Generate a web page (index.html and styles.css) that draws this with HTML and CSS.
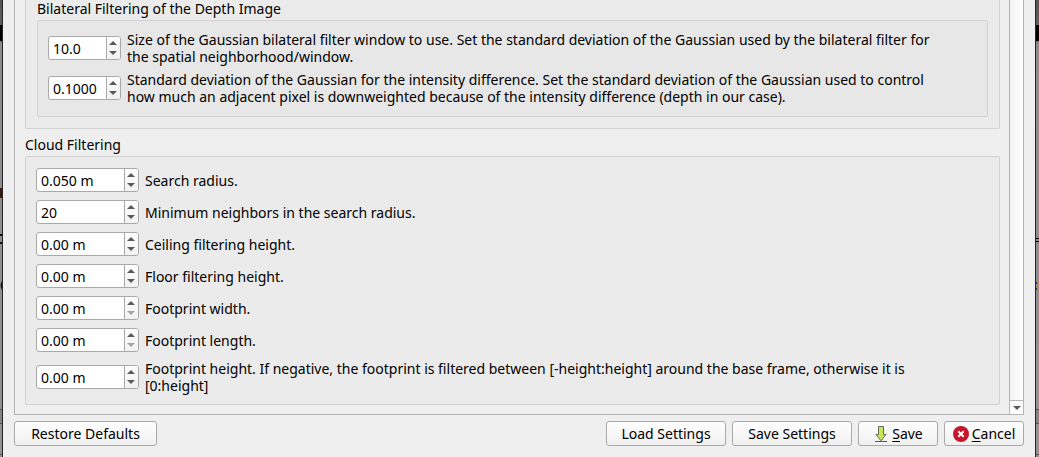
FILE: index.html
```html
<!DOCTYPE html>
<html lang="en">
<head>
<meta charset="utf-8">
<title>Export Settings</title>
<link rel="stylesheet" href="styles.css">
</head>
<body>
<div class="backdrop">
<main class="dialog">
  <div class="scroll-frame">
    <div class="content">
      <section class="group group-cut">
        <h2 class="title">Bilateral Filtering of the Depth Image</h2>
        <div class="group group-inner">
          <div class="row">
            <div class="spin spin-small"><input id="size" type="text" value="10.0"><span class="steps"><button class="up" aria-label="Increase"></button><button class="down" aria-label="Decrease"></button></span></div>
            <label for="size">Size of the Gaussian bilateral filter window to use. Set the standard deviation of the Gaussian used by the bilateral filter for<br>the spatial neighborhood/window.</label>
          </div>
          <div class="row">
            <div class="spin spin-small"><input id="dev" type="text" value="0.1000"><span class="steps"><button class="up" aria-label="Increase"></button><button class="down" aria-label="Decrease"></button></span></div>
            <label for="dev">Standard deviation of the Gaussian for the intensity difference. Set the standard deviation of the Gaussian used to control<br>how much an adjacent pixel is downweighted because of the intensity difference (depth in our case).</label>
          </div>
        </div>
      </section>
      <h2 class="title title-outer">Cloud Filtering</h2>
      <section class="group group-cloud">
        <div class="row">
          <div class="spin"><input id="radius" type="text" value="0.050 m"><span class="steps"><button class="up" aria-label="Increase"></button><button class="down" aria-label="Decrease"></button></span></div>
          <label for="radius">Search radius.</label>
        </div>
        <div class="row">
          <div class="spin"><input id="neighbors" type="text" value="20"><span class="steps"><button class="up" aria-label="Increase"></button><button class="down" aria-label="Decrease"></button></span></div>
          <label for="neighbors">Minimum neighbors in the search radius.</label>
        </div>
        <div class="row">
          <div class="spin"><input id="ceiling" type="text" value="0.00 m"><span class="steps"><button class="up" aria-label="Increase"></button><button class="down" aria-label="Decrease"></button></span></div>
          <label for="ceiling">Ceiling filtering height.</label>
        </div>
        <div class="row">
          <div class="spin"><input id="floor" type="text" value="0.00 m"><span class="steps"><button class="up" aria-label="Increase"></button><button class="down" aria-label="Decrease"></button></span></div>
          <label for="floor">Floor filtering height.</label>
        </div>
        <div class="row">
          <div class="spin"><input id="width" type="text" value="0.00 m"><span class="steps"><button class="up" aria-label="Increase"></button><button class="down" aria-label="Decrease" disabled></button></span></div>
          <label for="width">Footprint width.</label>
        </div>
        <div class="row">
          <div class="spin"><input id="length" type="text" value="0.00 m"><span class="steps"><button class="up" aria-label="Increase"></button><button class="down" aria-label="Decrease" disabled></button></span></div>
          <label for="length">Footprint length.</label>
        </div>
        <div class="row">
          <div class="spin"><input id="height" type="text" value="0.00 m"><span class="steps"><button class="up" aria-label="Increase"></button><button class="down" aria-label="Decrease"></button></span></div>
          <label for="height">Footprint height. If negative, the footprint is filtered between [-height:height] around the base frame, otherwise it is<br>[0:height]</label>
        </div>
      </section>
    </div>
    <div class="scrollbar">
      <button class="scroll-down down" aria-label="Scroll down"></button>
    </div>
  </div>
  <footer class="actions">
    <button class="btn btn-restore">Restore Defaults</button>
    <button class="btn btn-wide">Load Settings</button>
    <button class="btn btn-wide">Save Settings</button>
    <button class="btn btn-icon">
      <svg width="16" height="18" viewBox="0 0 16 18" aria-hidden="true"><path d="M2 16.500h12" stroke="#555" stroke-width="1"/><path d="M5.500 1.500h5v8h2.500L8 15.800 3 9.500h2.500z" fill="#c9e653" stroke="#666b58" stroke-width="1"/></svg>
      <span><u>S</u>ave</span>
    </button>
    <button class="btn btn-icon">
      <svg width="16" height="18" viewBox="0 0 16 18" aria-hidden="true"><circle cx="8" cy="9" r="8" fill="#c7162b"/><path d="M5.300 6.300l5.400 5.400M10.700 6.300l-5.400 5.400" stroke="#fff" stroke-width="2"/></svg>
      <span><u>C</u>ancel</span>
    </button>
  </footer>
</main>
<svg class="behind behind-left" width="2" height="457" aria-hidden="true"><path d="M0 188h2v10H0z" fill="#3c1710"/><path d="M0 234h2v2H0zM0 242h2v2H0z" fill="#111"/><path d="M2 281q-3 4 0 9z" fill="#2a1708"/><path d="M0 409h2v1H0zM0 423h2v1H0zM0 454h2v1H0z" fill="#555"/></svg>
<svg class="behind behind-right" width="3" height="457" aria-hidden="true"><path d="M0 238h3v1H0zM0 241h3v1H0z" fill="#000"/><path d="M0 282h1v2H0zM0 288h1v2H0z" fill="#123b78"/><path d="M2 282h1v3H2zM2 290h1v2H2z" fill="#c18b2c"/><path d="M0 409h3v1H0zM0 423h3v1H0zM0 454h3v1H0z" fill="#555"/></svg>
</div>
</body>
</html>
```
FILE: styles.css
```css
* { box-sizing: border-box; }
body {
  margin: 0;
  font: 14px/17px "Noto Sans", "Open Sans", sans-serif;
  color: #000;
}
button, input { font: inherit; color: inherit; }
.backdrop {
  position: relative;
  min-height: 100vh;
  display: flex;
  padding: 0 3px 0 2px;
  background: linear-gradient(#555 0, #606060 25px, #000 25px, #000 41px, #666 41px, #8c8c8c 43px, #929292 410px, #858585 410px, #858585 423px, #929292 423px);
}
.dialog {
  flex: 1;
  min-width: 0;
  padding: 0 11px;
  background: #efefef;
  border: solid #242424;
  border-width: 0 1px;
}
.behind { position: absolute; top: 0; }
.behind-left { left: 0; }
.behind-right { right: 0; }
.scroll-frame {
  display: flex;
  border: 1px solid #b4b4b4;
  border-top: 0;
}
.content { flex: 1; min-width: 0; padding: 0 9px 9px 10px; }
.group {
  padding: 11px;
  border: 1px solid #d3d3d3;
  border-radius: 2px;
  background: #ebebeb;
}
.group-cut { border-top: 0; border-radius: 0 0 2px 2px; padding-top: 0; }
.group-inner { background: #e7e7e7; padding: 10px 10px 11px; display: grid; gap: 6px; }
.title { margin: 0; padding-bottom: 3px; font-size: 14px; font-weight: 400; white-space: nowrap; }
.title-outer { padding-top: 7px; }
.group-cloud { display: grid; gap: 8px; padding: 11px 10px 10px; }
.row { display: flex; align-items: center; gap: 6px; }
.row label { white-space: nowrap; }
.spin {
  flex: none;
  display: flex;
  width: 103px;
  height: 24px;
  border: 1px solid #a9a9a9;
  border-radius: 3px;
  background: #fff;
  overflow: hidden;
}
.spin-small { width: 73px; }
.spin input {
  flex: 1;
  min-width: 0;
  padding: 0 0 0 4px;
  border: 0;
  background: none;
  outline: 0;
}
.steps {
  display: flex;
  flex-direction: column;
  width: 14px;
  border-left: 1px solid #a9a9a9;
  background: linear-gradient(#fdfdfd, #f1f1f1);
}
.steps button {
  flex: 1;
  display: flex;
  justify-content: center;
  padding: 0 1px 0 0;
  border: 0;
  background: none;
}
.up::before, .down::before {
  content: "";
  border: solid transparent;
  border-width: 0 4px;
}
.up::before { border-bottom: 4px solid #5a5a5a; }
.down::before { border-top: 4px solid #5a5a5a; }
.down:disabled::before { border-top-color: #a3a3a3; }
.steps .up { align-items: flex-end; padding-bottom: 3px; }
.steps .down { align-items: flex-start; padding-top: 3px; }
.scrollbar {
  display: flex;
  align-items: flex-end;
  width: 14px;
  border-left: 1px solid #b4b4b4;
  background: linear-gradient(90deg, #f3f3f3, #fff);
}
.scroll-down {
  display: flex;
  align-items: center;
  justify-content: center;
  width: 100%;
  height: 14px;
  padding: 0;
  border: 0;
  border-top: 1px solid #b4b4b4;
  background: #fbfbfb;
}
.actions { display: flex; gap: 6px; padding: 6px 0 11px; }
.btn {
  display: flex;
  align-items: center;
  justify-content: center;
  height: 25px;
  padding: 0;
  border: 1px solid #a9a9a9;
  border-radius: 3px;
  background: linear-gradient(#fefefe, #f0f0f0);
  white-space: nowrap;
}
.btn-restore { min-width: 143px; margin-right: auto; }
.btn-wide { min-width: 120px; }
.btn-icon { min-width: 80px; gap: 3px; }
.btn u { text-underline-offset: 2px; }
```
